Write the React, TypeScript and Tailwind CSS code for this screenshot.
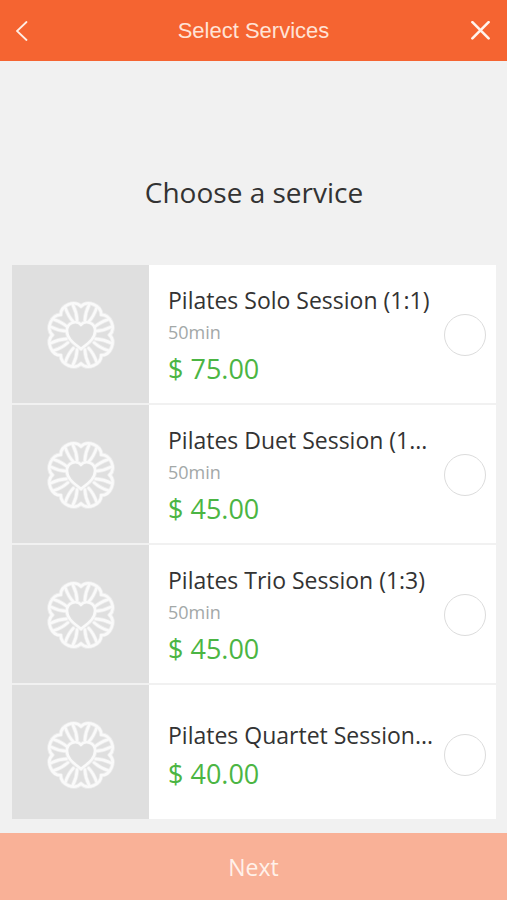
import { useState } from "react";

type Service = {
  id: string;
  name: string;
  duration?: string;
  price: string;
};

const services: Service[] = [
  { id: "solo", name: "Pilates Solo Session (1:1)", duration: "50min", price: "$ 75.00" },
  { id: "duet", name: "Pilates Duet Session (1...", duration: "50min", price: "$ 45.00" },
  { id: "trio", name: "Pilates Trio Session (1:3)", duration: "50min", price: "$ 45.00" },
  { id: "quartet", name: "Pilates Quartet Session...", price: "$ 40.00" },
];

const petalAngles = [22.5, 67.5, 112.5, 157.5, 202.5, 247.5, 292.5, 337.5];

function FlowerShape() {
  return (
    <>
      {petalAngles.map((angle) => (
        <g key={angle} transform={`rotate(${angle})`}>
          <path d="M-11 -26.5 C-9.5 -30 -6 -33 0 -33 C6 -33 9.5 -30 11 -26.5" />
          <path d="M-2 -15 C-3.5 -19 -4.5 -25 -4 -31 M2 -15 C3.5 -19 4.5 -25 4 -31" />
        </g>
      ))}
      <path d="M0 14 C-4 10 -14 5 -14 -4 C-14 -13 -4 -15 0 -10 C4 -15 14 -13 14 -4 C14 5 4 10 0 14 Z" fill="#dfdfdf" />
    </>
  );
}

function FlowerLogo() {
  return (
    <svg viewBox="-36 -36 72 72" className="size-[72px]" fill="none" stroke="#ffffff" strokeLinejoin="round" strokeLinecap="round" aria-hidden="true">
      <g strokeWidth="4.2" opacity="0.4">
        <FlowerShape />
      </g>
      <g strokeWidth="2.6" opacity="0.75">
        <FlowerShape />
      </g>
    </svg>
  );
}

function ServiceRow({ service, checked, onSelect }: { service: Service; checked: boolean; onSelect: () => void }) {
  const short = !service.duration;

  return (
    <li>
      <label htmlFor={service.id} className={`flex bg-white cursor-pointer ${short ? "h-[134px]" : "h-[138px]"}`}>
        <span className={`w-[137px] shrink-0 bg-[#dfdfdf] flex items-center justify-center ${short ? "pt-[6px]" : "pt-[2px]"}`}>
          <FlowerLogo />
        </span>
        <span className={`flex-1 min-w-0 flex flex-col justify-center pl-[19px] ${short ? "pt-3" : "pt-[6px]"}`}>
          <span className="truncate text-[23px] leading-8 text-[#333333]">{service.name}</span>
          {service.duration && <span className="text-[18px] leading-8 text-[#a3a8a8]">{service.duration}</span>}
          <span className={`text-[27px] text-[#4bb543] ${short ? "leading-[46px]" : "leading-[42px]"}`}>{service.price}</span>
        </span>
        <span className={`flex items-center pl-1 pr-[10px] ${short ? "pt-[6px]" : "pt-[2px]"}`}>
          <input
            id={service.id}
            type="radio"
            name="service"
            checked={checked}
            onChange={onSelect}
            className="appearance-none size-[42px] rounded-full border border-[#dcdcdc] bg-white checked:border-[#f56431] checked:bg-[#f56431]"
          />
        </span>
      </label>
    </li>
  );
}

export default function App() {
  const [selected, setSelected] = useState<string | null>(null);

  return (
    <div className="min-h-screen flex flex-col bg-[#f1f1f1] font-['Open_Sans','Noto_Sans',sans-serif]">
      <header className="h-[61px] shrink-0 bg-[#f56431] flex items-center justify-between px-4">
        <button type="button" aria-label="Back" className="w-6">
          <svg viewBox="0 0 12 20" className="w-3 h-5" fill="none" stroke="#ffeee5" strokeWidth="1.8" strokeLinecap="round" aria-hidden="true">
            <path d="M10.5 1 L1 10 L10.5 19" />
          </svg>
        </button>
        <h1 className="text-[22px] leading-7 text-[#ffe3d6] font-['Liberation_Sans',Arial,sans-serif]">Select Services</h1>
        <button type="button" aria-label="Close" className="w-6 flex justify-end">
          <svg viewBox="0 0 20 20" className="size-5" fill="none" stroke="#fff4ee" strokeWidth="2.6" strokeLinecap="round" aria-hidden="true">
            <path d="M1.4 1.2 L17.6 17.4 M17.6 1.2 L1.4 17.4" />
          </svg>
        </button>
      </header>

      <main className="flex-1 pl-3 pr-[11px]">
        <h2 className="pt-[111px] pb-[53px] text-center text-[28px] leading-10 text-[#333333]">Choose a service</h2>
        <ul className="flex flex-col gap-[2px] pb-[14px]">
          {services.map((service) => (
            <ServiceRow
              key={service.id}
              service={service}
              checked={selected === service.id}
              onSelect={() => setSelected(service.id)}
            />
          ))}
        </ul>
      </main>

      <button type="button" className="h-[67px] shrink-0 bg-[#f9b197] pt-[2px] text-[23px] text-[#fff1ea]">
        Next
      </button>
    </div>
  );
}
